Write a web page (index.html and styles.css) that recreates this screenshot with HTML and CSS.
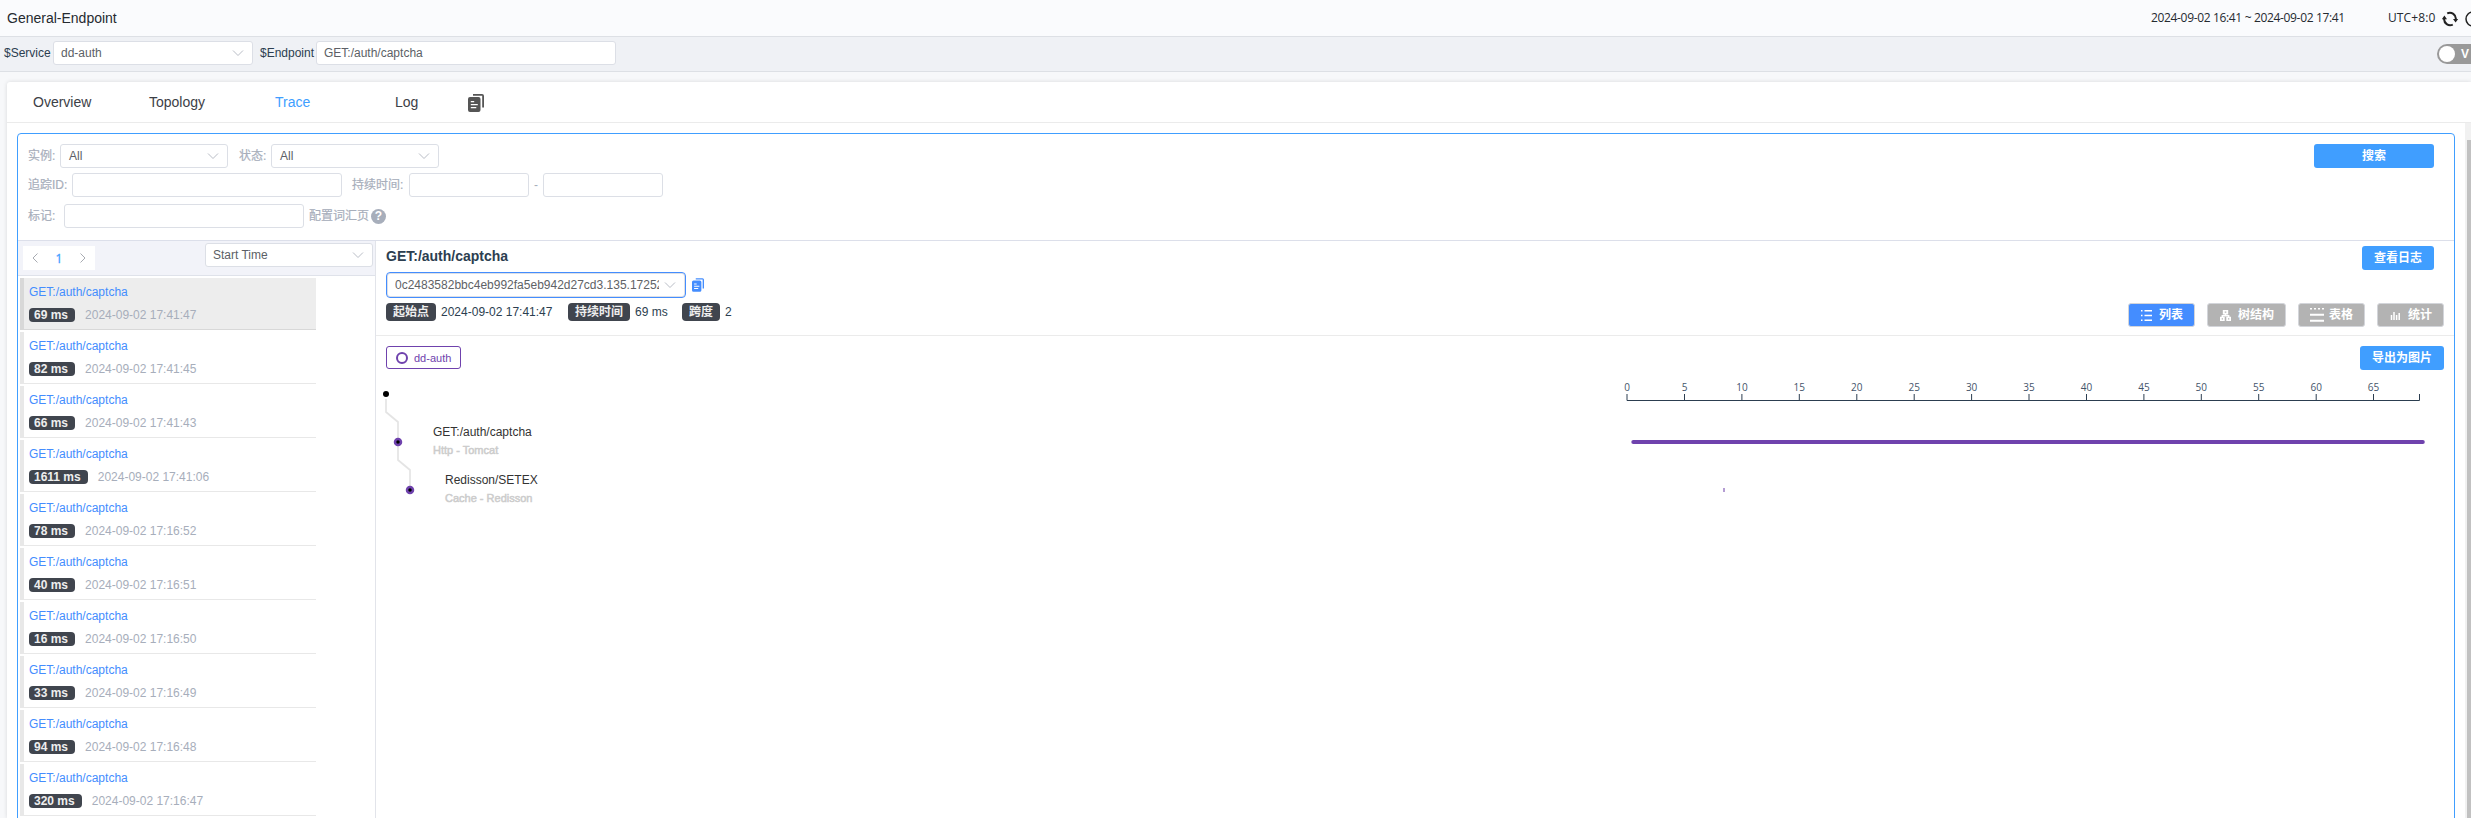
FILE: index.html
```
<!DOCTYPE html>
<html lang="zh">
<head>
<meta charset="utf-8">
<title>General-Endpoint</title>
<link rel="stylesheet" href="styles.css">
</head>
<body>
<svg class="defs" width="0" height="0">
  <symbol id="chev" viewBox="0 0 12 8"><path d="M1 1.500l5 5 5-5" fill="none" stroke="#b9bdc6" stroke-width="1"/></symbol>
  <symbol id="copy" viewBox="0 0 16 18"><path d="M5 0h9a2 2 0 0 1 2 2v11.500h-1.800V1.800H5z"/><path fill-rule="evenodd" d="M2 3h8.500a2 2 0 0 1 2 2v11a2 2 0 0 1-2 2H2a2 2 0 0 1-2-2V5a2 2 0 0 1 2-2zm.8 4v1.300h3.400V7zm0 3v1.300h7V10zm0 3v1.300h5.500V13z"/></symbol>
</svg>
<header class="top">
  <h1 class="title">General-Endpoint</h1>
  <div class="range">2024-09-02 16:41 ~ 2024-09-02 17:41</div>
  <div class="utc">UTC+8:0</div>
  <svg class="refresh" width="16" height="16" viewBox="0 0 16 16"><g fill="none" stroke="#222" stroke-width="2"><path d="M5.200 2.400A6 6 0 0 1 13.800 8.500M10.800 13.600A6 6 0 0 1 2.200 7.500"/></g><path fill="#222" d="M11 8h5.200l-2.600 3.600zM5 8.200H-.2L2.400 4.400z"/></svg>
  <svg class="clock" width="16" height="16" viewBox="0 0 16 16"><circle cx="8" cy="8" r="7" fill="none" stroke="#222" stroke-width="1.500"/></svg>
</header>
<section class="vars">
  <span class="var">$Service</span>
  <div class="field w200">dd-auth<svg class="chev"><use href="#chev"/></svg></div>
  <span class="var second">$Endpoint</span>
  <div class="field w300">GET:/auth/captcha</div>
  <div class="toggle"><i></i><b>V</b></div>
</section>
<main class="card">
  <nav class="tabs">
    <a class="t1">Overview</a><a class="t2">Topology</a><a class="t3 on">Trace</a><a class="t4">Log</a>
    <svg class="tabcopy" width="16" height="18" fill="#555"><use href="#copy"/></svg>
  </nav>
  <div class="body">
    <div class="panel">
      <div class="filter">
        <div class="filters">
          <div class="frow">
            <label class="l1">实例:</label><div class="field w168">All<svg class="chev"><use href="#chev"/></svg></div>
            <label class="l2">状态:</label><div class="field w168">All<svg class="chev"><use href="#chev"/></svg></div>
          </div>
          <div class="frow r2">
            <label class="l3">追踪ID:</label><div class="field w270"></div>
            <label class="l4">持续时间:</label><div class="field w120"></div><span class="dash">-</span><div class="field w120"></div>
          </div>
          <div class="frow r3">
            <label class="l5">标记:</label><div class="field w240"></div>
            <label class="l6">配置词汇页</label><span class="help">?</span>
          </div>
        </div>
        <button class="btn search">搜索</button>
      </div>
      <div class="split">
        <aside class="list">
          <div class="listbar">
            <div class="pager">
              <svg width="6" height="10" viewBox="0 0 6 10"><path d="M5.500.5L1 5l4.500 4.500" fill="none" stroke="#a8abb2"/></svg>
              <b>1</b>
              <svg width="6" height="10" viewBox="0 0 6 10"><path d="M.5.5L5 5 .5 9.500" fill="none" stroke="#a8abb2"/></svg>
            </div>
            <div class="field w168">Start Time<svg class="chev"><use href="#chev"/></svg></div>
          </div>
          <div class="item sel"><a>GET:/auth/captcha</a><p><b>69 ms</b><span>2024-09-02 17:41:47</span></p></div>
          <div class="item"><a>GET:/auth/captcha</a><p><b>82 ms</b><span>2024-09-02 17:41:45</span></p></div>
          <div class="item"><a>GET:/auth/captcha</a><p><b>66 ms</b><span>2024-09-02 17:41:43</span></p></div>
          <div class="item"><a>GET:/auth/captcha</a><p><b>1611 ms</b><span>2024-09-02 17:41:06</span></p></div>
          <div class="item"><a>GET:/auth/captcha</a><p><b>78 ms</b><span>2024-09-02 17:16:52</span></p></div>
          <div class="item"><a>GET:/auth/captcha</a><p><b>40 ms</b><span>2024-09-02 17:16:51</span></p></div>
          <div class="item"><a>GET:/auth/captcha</a><p><b>16 ms</b><span>2024-09-02 17:16:50</span></p></div>
          <div class="item"><a>GET:/auth/captcha</a><p><b>33 ms</b><span>2024-09-02 17:16:49</span></p></div>
          <div class="item"><a>GET:/auth/captcha</a><p><b>94 ms</b><span>2024-09-02 17:16:48</span></p></div>
          <div class="item"><a>GET:/auth/captcha</a><p><b>320 ms</b><span>2024-09-02 17:16:47</span></p></div>
        </aside>
        <section class="detail">
          <div class="dhead">
            <div class="dleft">
              <h2>GET:/auth/captcha</h2>
              <div class="idrow">
                <div class="idsel"><span>0c2483582bbc4eb992fa5eb942d27cd3.135.17252</span><svg class="chev"><use href="#chev"/></svg></div>
                <svg width="12" height="14" fill="#448dfe"><use href="#copy"/></svg>
              </div>
              <div class="meta"><b>起始点</b><span class="m1">2024-09-02 17:41:47</span><b>持续时间</b><span class="m2">69 ms</span><b>跨度</b><span>2</span></div>
            </div>
            <div class="dright">
              <button class="btn logs">查看日志</button>
              <div class="views">
                <button class="view on"><svg width="11" height="11" viewBox="0 0 11 11" fill="#fff"><path d="M0 0h1.500v1.500H0zM3.500 0H11v1.500H3.500zM0 4.700h1.500v1.500H0zM3.500 4.700H11v1.500H3.500zM0 9.400h1.500v1.500H0zM3.500 9.400H11v1.500H3.500z"/></svg>列表</button>
                <button class="view v2"><svg width="11" height="11" viewBox="0 0 11 11"><path d="M5.500 3v3M2.300 8V5.800h6.400V8" fill="none" stroke="#fff" stroke-width="1.500"/><path fill="#fff" fill-rule="evenodd" d="M2.800 0h5.400v4.500H2.800zM4.700 1.600v1.200h1.600V1.600zM0 6.800h4.700V11H0zM1.700 8.300v1.200H3V8.300zM6.300 6.800H11V11H6.300zM8 8.300v1.200h1.300V8.300z"/></svg>树结构</button>
                <button class="view v3"><svg width="14" height="14" viewBox="0 0 14 14" fill="#fff"><path d="M0 0h2v1.500H0zM4 0h2v1.500H4zM8 0h2v1.500H8zM12 0h2v1.500h-2zM0 5.800h14v2H0zM0 11.800h14v2H0z"/></svg>表格</button>
                <button class="view"><svg width="11" height="11" viewBox="0 0 11 11"><path d="M1.500 5v5M4 2v8M6.600 5v5M9.200 3v7" fill="none" stroke="#fff" stroke-width="1.500"/></svg>统计</button>
              </div>
            </div>
          </div>
          <div class="legend">
            <div class="tag"><i></i>dd-auth</div>
            <button class="btn export">导出为图片</button>
          </div>
          <svg class="trace" width="2078" height="448" viewBox="376 370 2078 448">
            <g fill="none" stroke="#e4e4e4" stroke-width="1.700"><path d="M386 399v13l12 10v16M398 446v14l12 10v16"/></g>
            <circle cx="386" cy="394" r="3"/>
            <g fill="#000" stroke="#6f42ad" stroke-width="2.500"><circle cx="398" cy="442" r="3"/><circle cx="410" cy="490" r="3"/></g>
            <g class="name"><text x="433" y="436">GET:/auth/captcha</text><text x="445" y="484">Redisson/SETEX</text></g>
            <g class="sub"><text x="433" y="454">Http - Tomcat</text><text x="445" y="502">Cache - Redisson</text></g>
            <path d="M1627 394v6.500H2419.500V394M1684.500 394v6M1741.900 394v6M1799.300 394v6M1856.800 394v6M1914.200 394v6M1971.600 394v6M2029 394v6M2086.500 394v6M2143.900 394v6M2201.300 394v6M2258.700 394v6M2316.200 394v6M2373.500 394v6" fill="none" stroke="#2c3e50"/>
            <g class="ticks"><text x="1627" y="391">0</text><text x="1684.500" y="391">5</text><text x="1742" y="391">10</text><text x="1799.300" y="391">15</text><text x="1856.800" y="391">20</text><text x="1914.200" y="391">25</text><text x="1971.600" y="391">30</text><text x="2029" y="391">35</text><text x="2086.500" y="391">40</text><text x="2143.900" y="391">45</text><text x="2201.300" y="391">50</text><text x="2258.700" y="391">55</text><text x="2316.200" y="391">60</text><text x="2373.500" y="391">65</text></g>
            <rect x="1631.300" y="440" width="793.500" height="4" rx="2" fill="#6f42ad"/>
            <rect x="1723" y="488" width="2" height="4" fill="#b49dd3"/>
          </svg>
        </section>
      </div>
    </div>
    <div class="scroll"><i></i></div>
  </div>
</main>
</body>
</html>
```
FILE: styles.css
```
* { box-sizing: border-box; }
html, body { margin: 0; height: 818px; overflow: hidden; }
body { width: 2471px; background: #f7f8fa; font: 12px/16px "Liberation Sans", "Noto Sans CJK SC", sans-serif; color: #2c3e50; display: flex; flex-direction: column; }
h1, h2, p { margin: 0; }
svg { display: block; flex: none; }
.defs { position: absolute; }
button { border: 0; padding: 0; font: bold 12px/24px "Liberation Sans", "Noto Sans CJK SC", sans-serif; color: #fff; text-align: center; }

.top { flex: none; height: 37px; background: #fafbfd; border-bottom: 1px solid #dde0e5; display: flex; align-items: center; padding-left: 7px; color: #252a30; }
.title { font-size: 14px; font-weight: 400; width: 2144px; flex: none; padding-bottom: 1px; }
.range, .utc { font: 12px/16px "Open Sans", sans-serif; white-space: nowrap; letter-spacing: -.34px; width: 237px; flex: none; }
.utc { width: 54px; letter-spacing: .1px; }
.refresh { margin-top: 2px; }
.clock { margin: 2px 0 0 7px; }

.vars { flex: none; height: 35px; background: #eff1f5; border-bottom: 1px solid #dde0e5; display: flex; align-items: center; padding: 0 0 2px 4px; }
.var { width: 49px; flex: none; }
.var.second { margin-left: 7px; width: 56px; }
.field { flex: none; height: 24px; background: #fff; border: 1px solid #dcdfe6; border-radius: 3px; padding: 0 8px 0 7px; display: flex; align-items: center; justify-content: space-between; color: #5c5f66; }
.chev { width: 12px; height: 8px; }
.w200 { width: 200px; }
.w300 { width: 300px; }
.w168 { width: 168px; }
.w270 { width: 270px; }
.w240 { width: 240px; }
.w120 { width: 120px; }
.toggle { flex: none; width: 60px; height: 20px; margin: 2px 0 0 1821px; border-radius: 10px; background: #999; display: flex; align-items: center; padding-left: 2px; gap: 6px; color: #fff; }
.toggle i { width: 16px; height: 16px; border-radius: 50%; background: #fff; }

.card { margin: 10px 0 0 7px; height: 736px; background: #fff; box-shadow: 0 0 4px rgba(0,0,0,.13); border-radius: 3px 0 0 0; }
.tabs { height: 41px; border-bottom: 1px solid #ebebeb; display: flex; align-items: center; font-size: 14px; color: #3c4046; padding-left: 26px; }
.t1 { width: 116px; }
.t2 { width: 126px; }
.t3 { width: 120px; }
.t4 { width: 73px; }
.on { color: #409eff; }
.tabcopy { margin-top: 1px; }
.body { display: flex; justify-content: space-between; height: 695px; }
.panel { width: 2438px; height: 700px; margin: 10px 0 0 10px; border: 1px solid #409eff; border-radius: 4px; }
.scroll { width: 6px; background: #f1f1f1; padding: 17px 0 0 2px; }
.scroll i { display: block; height: 680px; background: #c1c1c1; }

.filter { height: 107px; border-bottom: 1px solid #dcdfea; display: flex; justify-content: space-between; align-items: flex-start; padding: 10px 20px 0 10px; color: #a7aebb; }
.filter .field { padding-left: 8px; }
.frow { display: flex; align-items: center; }
.r2 { margin-top: 5px; }
.r3 { margin-top: 7px; }
.filter label { flex: none; white-space: nowrap; -webkit-text-stroke: .2px #a7aebb; }
.l1 { width: 32px; }
.l2 { width: 32px; margin-left: 11px; }
.l3 { width: 44px; }
.l4 { width: 57px; margin-left: 10px; }
.l5 { width: 36px; }
.l6 { width: 62px; margin-left: 5px; }
.dash { width: 14px; text-align: center; }
.help { width: 15px; height: 15px; border-radius: 50%; background: #a7aebb; color: #fff; font-weight: bold; line-height: 15px; text-align: center; margin-top: 1px; }
.btn { background: #409eff; border-radius: 3px; height: 24px; }
.search { width: 120px; }

.split { display: flex; }
.list { width: 358px; height: 600px; border-right: 1px solid #e2e4ea; flex: none; }
.listbar { height: 35px; background: #f2f3f9; border-bottom: 1px solid #dfe2ea; display: flex; align-items: flex-start; justify-content: space-between; padding: 2px 2px 0 5px; margin-bottom: 2px; }
.pager { width: 72px; height: 24px; margin-top: 3px; background: #fff; display: flex; align-items: center; justify-content: space-between; padding: 0 9px; color: #409eff; font-weight: 400; }
.pager b { font: 12px "Open Sans", sans-serif; -webkit-text-stroke: .3px #409eff; }
.item { height: 52px; width: 296px; margin: 0 0 2px 2px; border-left: 4px solid #e8e8e8; border-bottom: 1px solid #e8e8e8; padding: 6px 0 0 5px; }
.item.sel { background: #ededed; border-color: #d8d8d8; }
.item a { display: block; color: #448dfe; }
.item p { display: flex; margin-top: 8px; height: 14px; line-height: 14px; color: #a7aebb; }
.item b { background: #40454e; color: #eee; border-radius: 4px; padding: 0 7px 0 5px; margin-right: 10px; }

.detail { width: 2078px; }
.dhead { height: 95px; border-bottom: 1px solid #ebebeb; display: flex; justify-content: space-between; padding-left: 10px; }
.dleft h2 { font-size: 14px; line-height: 16px; margin-top: 7px; }
.idrow { display: flex; align-items: center; gap: 6px; margin-top: 8px; }
.idsel { width: 300px; height: 26px; border: 1px solid #448dfe; border-radius: 4px; padding: 0 9px 0 8px; display: flex; align-items: center; justify-content: space-between; color: #606266; box-shadow: inset 0 0 0 1px #dcdfe6; }
.idsel span { width: 264px; overflow: hidden; white-space: nowrap; }
.meta { display: flex; align-items: center; margin-top: 5px; height: 18px; }
.meta b { background: #40454e; color: #eee; border-radius: 4px; height: 18px; line-height: 18px; padding: 0 7px; margin-right: 5px; }
.m1 { width: 127px; }
.m2 { width: 47px; }
.dright { display: flex; flex-direction: column; align-items: flex-end; padding-right: 10px; }
.logs { width: 72px; margin: 5px 10px 0 0; }
.views { display: flex; gap: 12px; margin-top: 33px; }
.view { width: 67px; height: 24px; border: 1px solid #d3d5da; border-radius: 3px; background: #b3b3b3; display: flex; align-items: center; gap: 7px; padding: 0 0 0 12px; line-height: 22px; }
.view.on { background: #448dff; color: #fff; }
.v2 { width: 79px; }
.v3 { gap: 5px; padding-left: 11px; }
.legend { height: 34px; padding: 10px 10px 0; display: flex; justify-content: space-between; }
.tag { width: 75px; height: 23px; border: 1px solid #6f42ad; border-radius: 3px; color: #6f42ad; font-size: 11px; display: flex; align-items: center; gap: 6px; padding-left: 9px; }
.tag i { width: 12px; height: 12px; border: 2px solid #6f42ad; border-radius: 50%; margin-top: 1px; }
.export { width: 84px; }
.name { font-size: 12px; fill: #333; }
.sub { font-size: 11px; fill: #ccc; stroke: #ccc; stroke-width: .5px; }
.ticks { font: 10px "Open Sans", sans-serif; fill: #44546a; text-anchor: middle; }
```
